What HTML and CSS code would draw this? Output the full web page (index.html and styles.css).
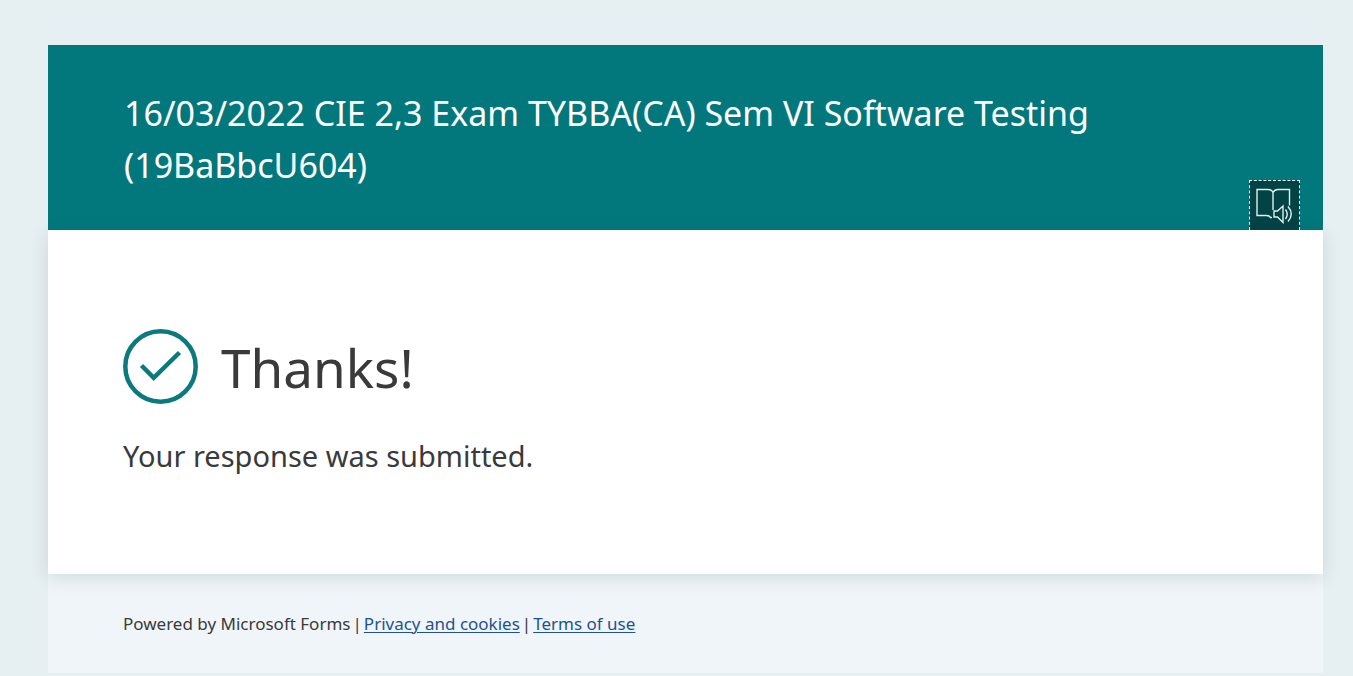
FILE: index.html
```html
<!DOCTYPE html>
<html lang="en">
<head>
<meta charset="utf-8">
<title>Exam form</title>
<link rel="stylesheet" href="styles.css">
</head>
<body>
<div class="form">
  <header class="form-header">
    <h1 class="title">16/03/2022 CIE 2,3 Exam TYBBA(CA) Sem VI Software Testing (19BaBbcU604)</h1>
    <button class="reader" type="button" aria-label="Immersive Reader">
      <svg class="reader-icon" viewBox="0 0 38 36" fill="none" stroke="currentColor" stroke-width="1.4">
        <path d="M17 22V4.500Q15.500 1.500 12 1.500H1V27.500H10.500Q13.500 27.500 14.500 29.500H16M17 4.500Q18.500 1.500 22 1.500H33.500V17.500"/>
        <path d="M18 23H21.500L27 18V34.500L21.500 29H18Z"/>
        <path d="M29.500 21.500Q33 26 29.500 31M32 18.500Q38.500 26 32 33.500"/>
      </svg>
    </button>
  </header>
  <main class="message">
    <div class="thanks">
      <svg class="check" viewBox="0 0 75 75" fill="none" stroke="currentColor" stroke-width="4.500">
        <circle cx="37.500" cy="37.500" r="35.200"/>
        <path d="M18.500 36.500L30.700 48.800L56.500 23.500"/>
      </svg>
      <h2 class="thanks-text">Thanks!</h2>
    </div>
    <p class="status">Your response was submitted.</p>
  </main>
  <footer class="form-footer">
    <span>Powered by Microsoft Forms</span>
    <span>|</span>
    <a class="link" href="#">Privacy and cookies</a>
    <span>|</span>
    <a class="link" href="#">Terms of use</a>
  </footer>
</div>
</body>
</html>
```
FILE: styles.css
```css
* { box-sizing: border-box; }
body {
  margin: 0;
  padding: 45px 30px 0 48px;
  background: #e6f0f3;
  color: #3a3a3a;
  font-family: "Segoe UI", "Noto Sans", sans-serif;
}
.form { background: #eff5f8; }
.form-header {
  position: relative;
  padding: 42px 200px 39px 76px;
  background: #03787c;
  color: #fff;
}
.title { margin: 0; font-size: 34px; line-height: 52px; font-weight: 400; }
.reader {
  position: absolute;
  right: 23px;
  bottom: 0;
  width: 51px;
  height: 50px;
  padding: 7px 6px;
  border: 1px dashed #fff;
  border-bottom: 0;
  background: #024346;
  color: #e0f0f0;
}
.reader-icon { display: block; width: 38px; height: 36px; }
.message {
  position: relative;
  padding: 98px 75px;
  background: #fff;
  box-shadow: 0 4px 18px rgba(0, 30, 30, 0.12);
}
.thanks { display: flex; align-items: center; gap: 23px; }
.check { width: 75px; height: 75px; color: #0b7a7e; }
.thanks-text { margin: 0; padding-top: 4px; font-size: 53px; line-height: 72px; font-weight: 400; }
.status { margin: 32px 0 0; font-size: 29px; line-height: 40px; }
.form-footer {
  display: flex;
  flex-wrap: wrap;
  column-gap: 2px;
  padding: 36px 75px 35px;
  font-size: 17px;
  line-height: 28px;
}
.link { color: #1f5290; text-underline-offset: 2px; text-decoration-thickness: 1px; }
```
